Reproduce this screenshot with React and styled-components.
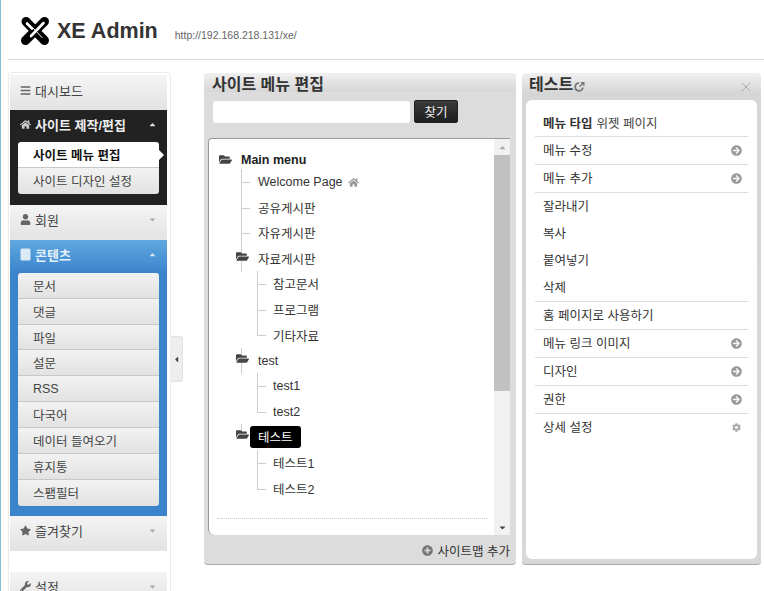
import { createGlobalStyle, styled } from "styled-components";
import {
  FaArrowCircleRight,
  FaBars,
  FaCaretDown,
  FaCaretLeft,
  FaCaretUp,
  FaCog,
  FaFolderOpen,
  FaHome,
  FaPlusCircle,
  FaStar,
  FaUser,
  FaWrench,
} from "react-icons/fa";
import { X } from "lucide-react";

const GlobalStyle = createGlobalStyle`
  html, body {
    margin: 0;
    height: 591px;
    overflow: hidden;
    background: #fff;
  }
  body {
    font-family: "Liberation Sans", "Noto Sans CJK KR", sans-serif;
    font-size: 12.5px;
    color: #333;
  }
  * { box-sizing: border-box; }
`;

const PageIcon = () => (
  <svg width="11" height="13" viewBox="0 0 11 13">
    <rect x="0.5" y="0.5" width="10" height="12" rx="1.5" fill="currentColor" />
  </svg>
);

const sideMenus = [
  { label: "대시보드", icon: <FaBars />, kind: "plain", noCaret: true },
  {
    label: "사이트 제작/편집",
    icon: <FaHome />,
    kind: "dark",
    items: ["사이트 메뉴 편집", "사이트 디자인 설정"],
    active: 0,
  },
  { label: "회원", icon: <FaUser />, kind: "plain" },
  {
    label: "콘텐츠",
    icon: <PageIcon />,
    kind: "blue",
    items: ["문서", "댓글", "파일", "설문", "RSS", "다국어", "데이터 들여오기", "휴지통", "스팸필터"],
  },
  { label: "즐겨찾기", icon: <FaStar />, kind: "plain" },
];

const actions = [
  { label: "메뉴 수정", icon: "arrow", line: true },
  { label: "메뉴 추가", icon: "arrow", line: true },
  { label: "잘라내기" },
  { label: "복사" },
  { label: "붙여넣기" },
  { label: "삭제", line: true },
  { label: "홈 페이지로 사용하기", line: true },
  { label: "메뉴 링크 이미지", icon: "arrow", line: true },
  { label: "디자인", icon: "arrow", line: true },
  { label: "권한", icon: "arrow", line: true },
  { label: "상세 설정", icon: "gear" },
];

const XeLogo = () => (
  <svg width="30" height="30" viewBox="0 0 30 30">
    <g fill="none" strokeLinecap="round">
      <path d="M6 5.5 L24.5 24.5" stroke="#000" strokeWidth="9" />
      <path d="M24.5 5.5 L5.5 24.5" stroke="#000" strokeWidth="9" />
      <path d="M7 7.5 L12 12.5" stroke="#fff" strokeWidth="2.6" />
      <path d="M23.5 7 L11 20" stroke="#fff" strokeWidth="2.6" />
      <path d="M13 12 L22 21.5" stroke="#fff" strokeWidth="1" />
    </g>
  </svg>
);

const ShareIcon = () => (
  <svg width="11" height="11" viewBox="0 0 11 11">
    <path d="M8.8 6.5 A3.8 3.8 0 1 1 5 2.2" fill="none" stroke="#777" strokeWidth="1.8" />
    <path d="M5.5 5.6 L9 2.4 M6.6 1.6 H9.8 V4.8" fill="none" stroke="#777" strokeWidth="1.4" />
  </svg>
);

const TreeRow = ({ level, folder, last, selected, home, children }) => (
  <Row $level={level} $folder={folder} $last={last}>
    {folder && (
      <FolderIcon $level={level}>
        <FaFolderOpen />
      </FolderIcon>
    )}
    <RowText $selected={selected} $bold={level === 0}>
      {children}
    </RowText>
    {home && (
      <HomeMark>
        <FaHome />
      </HomeMark>
    )}
  </Row>
);

const App = () => {
  return (
    <Page>
      <GlobalStyle />
      <Header>
        <XeLogo />
        <Brand>XE Admin</Brand>
        <SiteUrl>http://192.168.218.131/xe/</SiteUrl>
      </Header>

      <Body>
        <Sidebar>
          {sideMenus.map((menu) => (
            <MenuGroup key={menu.label} $kind={menu.kind}>
              <MenuHead $kind={menu.kind}>
                <MenuIcon $kind={menu.kind}>{menu.icon}</MenuIcon>
                <MenuLabel $kind={menu.kind}>{menu.label}</MenuLabel>
                {!menu.noCaret && (
                  <MenuCaret $kind={menu.kind}>{menu.items ? <FaCaretUp /> : <FaCaretDown />}</MenuCaret>
                )}
              </MenuHead>
              {menu.items && (
                <SubList $kind={menu.kind}>
                  {menu.items.map((item, i) => (
                    <SubItem key={item} $active={menu.active === i}>
                      {item}
                    </SubItem>
                  ))}
                </SubList>
              )}
            </MenuGroup>
          ))}
          <SideSpacer />
          <MenuGroup $kind="plain">
            <MenuHead $kind="plain">
              <MenuIcon $kind="plain">
                <FaWrench />
              </MenuIcon>
              <MenuLabel $kind="plain">설정</MenuLabel>
              <MenuCaret $kind="plain">
                <FaCaretDown />
              </MenuCaret>
            </MenuHead>
          </MenuGroup>
        </Sidebar>

        <Toggle>
          <FaCaretLeft />
        </Toggle>

        <EditPanel>
          <PanelTitle>사이트 메뉴 편집</PanelTitle>
          <SearchBar>
            <SearchInput />
            <SearchButton>찾기</SearchButton>
          </SearchBar>
          <TreeBox>
            <TreeScroll>
              <TreeList>
                <TreeRow level={0} folder>Main menu</TreeRow>
                <TreeRow level={1} home>Welcome Page</TreeRow>
                <TreeRow level={1}>공유게시판</TreeRow>
                <TreeRow level={1}>자유게시판</TreeRow>
                <TreeRow level={1} folder>자료게시판</TreeRow>
                <TreeRow level={2}>참고문서</TreeRow>
                <TreeRow level={2}>프로그램</TreeRow>
                <TreeRow level={2} last>기타자료</TreeRow>
                <TreeRow level={1} folder>test</TreeRow>
                <TreeRow level={2}>test1</TreeRow>
                <TreeRow level={2} last>test2</TreeRow>
                <TreeRow level={1} folder last selected>테스트</TreeRow>
                <TreeRow level={2}>테스트1</TreeRow>
                <TreeRow level={2} last>테스트2</TreeRow>
              </TreeList>
              <TreeRule />
            </TreeScroll>
            <ScrollBar>
              <ScrollArrow>
                <FaCaretUp />
              </ScrollArrow>
              <ScrollTrack>
                <ScrollThumb />
              </ScrollTrack>
              <ScrollArrow $dark>
                <FaCaretDown />
              </ScrollArrow>
            </ScrollBar>
          </TreeBox>
          <PanelFoot>
            <FootIcon>
              <FaPlusCircle />
            </FootIcon>
            사이트맵 추가
          </PanelFoot>
        </EditPanel>

        <DetailPanel>
          <DetailHead>
            <PanelTitle $small>테스트</PanelTitle>
            <ShareIcon />
            <CloseMark>
              <X size={16} strokeWidth={1.1} />
            </CloseMark>
          </DetailHead>
          <DetailCard>
            <TypeRow>
              <TypeKey>메뉴 타입</TypeKey>위젯 페이지
            </TypeRow>
            {actions.map((action) => (
              <ActionRow key={action.label} $line={action.line}>
                {action.label}
                {action.icon === "arrow" && (
                  <ActionIcon>
                    <FaArrowCircleRight />
                  </ActionIcon>
                )}
                {action.icon === "gear" && (
                  <ActionIcon $small>
                    <FaCog />
                  </ActionIcon>
                )}
              </ActionRow>
            ))}
          </DetailCard>
        </DetailPanel>
      </Body>
    </Page>
  );
};

const Page = styled.div`
  width: 764px;
  height: 591px;
  overflow: hidden;
  border-left: 1px solid #7fc4d8;
`;

const Header = styled.header`
  height: 60px;
  margin-left: 7px;
  padding: 3px 0 0 12px;
  display: flex;
  align-items: center;
  border-bottom: 1px solid #dcdcdc;
`;

const Brand = styled.div`
  margin-left: 7px;
  font-size: 21.5px;
  font-weight: 700;
  color: #333;
`;

const SiteUrl = styled.div`
  margin: 8px 0 0 17px;
  font-size: 10.5px;
  color: #666;
`;

const Body = styled.div`
  display: flex;
  align-items: flex-start;
  padding: 12px 0 0 7px;
`;

const Sidebar = styled.nav`
  flex: none;
  width: 163px;
  height: 530px;
  padding: 2px 3px 0 1px;
  background: #fff;
  border: 1px solid #ececec;
  border-radius: 3px 3px 0 0;
`;

const MenuGroup = styled.div`
  background: ${(p) =>
    p.$kind === "dark" ? "#222" : p.$kind === "blue" ? "#3b84cc" : "transparent"};
`;

const MenuHead = styled.div`
  height: ${(p) => (p.$kind === "plain" ? "35px" : p.$kind === "blue" ? "33px" : "32px")};
  padding: 0 10px ${(p) => (p.$kind === "plain" ? "4px" : "3px")};
  display: flex;
  align-items: center;
  background: ${(p) =>
    p.$kind === "blue"
      ? "linear-gradient(#5fa8df, #3b84cc)"
      : p.$kind === "dark"
      ? "#222"
      : "linear-gradient(#f4f4f4, #e3e3e3)"};
  border-bottom: ${(p) => (p.$kind === "plain" ? "1px solid #e6e6e6" : "0")};
`;

const MenuIcon = styled.span`
  width: 15px;
  display: flex;
  font-size: 11px;
  color: ${(p) => (p.$kind === "plain" ? "#666" : p.$kind === "dark" ? "#ccc" : "#dbeaf7")};
`;

const MenuLabel = styled.span`
  flex: 1;
  font-size: 13px;
  font-weight: ${(p) => (p.$kind === "plain" ? 400 : 700)};
  color: ${(p) => (p.$kind === "plain" ? "#444" : p.$kind === "dark" ? "#eee" : "#e4f0fa")};
`;

const MenuCaret = styled.span`
  display: flex;
  font-size: 9px;
  color: ${(p) => (p.$kind === "plain" ? "#aaa" : p.$kind === "dark" ? "#ddd" : "#cfe3f5")};
`;

const SubList = styled.ul`
  list-style: none;
  margin: 0;
  padding: 0 8px ${(p) => (p.$kind === "blue" ? "10px" : "11px")};
`;

const SubItem = styled.li`
  position: relative;
  height: 25.9px;
  padding-left: 15px;
  display: flex;
  align-items: center;
  color: ${(p) => (p.$active ? "#111" : "#444")};
  font-weight: ${(p) => (p.$active ? 700 : 400)};
  background: ${(p) => (p.$active ? "#fff" : "linear-gradient(#f2f2f2, #e2e2e2)")};
  border-bottom: 1px solid #c8c8c8;

  &:first-child {
    border-radius: 3px 3px 0 0;
  }
  &:last-child {
    border-bottom: 0;
    border-radius: 0 0 3px 3px;
  }
  ${(p) =>
    p.$active &&
    `&::after {
      content: "";
      position: absolute;
      right: -5px;
      top: 8px;
      border-left: 5px solid #fff;
      border-top: 5px solid transparent;
      border-bottom: 5px solid transparent;
    }`}
`;

const SideSpacer = styled.div`
  height: 21px;
`;

const Toggle = styled.div`
  flex: none;
  width: 12px;
  height: 46px;
  margin-top: 264px;
  display: flex;
  align-items: center;
  justify-content: center;
  font-size: 9px;
  color: #444;
  background: #eee;
  border: 1px solid #e2e2e2;
  border-left: 0;
  border-radius: 0 3px 3px 0;
`;

const EditPanel = styled.section`
  flex: none;
  width: 312px;
  height: 492px;
  margin: 1px 0 0 21px;
  display: flex;
  flex-direction: column;
  background: #dcdcdc;
  border-bottom: 1px solid #aaa;
  border-radius: 4px;
`;

const PanelTitle = styled.h2`
  margin: 0;
  height: ${(p) => (p.$small ? "auto" : "19px")};
  padding: ${(p) => (p.$small ? "0" : "3px 0 0 8px")};
  font-size: 16px;
  line-height: 18px;
  font-weight: 700;
  color: #333;
  background: ${(p) => (p.$small ? "none" : "linear-gradient(#f0f0f0, #d6d6d6)")};
  border-radius: 4px 4px 0 0;
`;

const SearchBar = styled.div`
  display: flex;
  align-items: center;
  gap: 4px;
  margin-top: 8px;
  padding-left: 9px;
`;

const SearchInput = styled.input`
  width: 197px;
  height: 22px;
  border: 0;
  border-radius: 3px;
  background: #fff;
`;

const SearchButton = styled.button`
  width: 44px;
  height: 23px;
  padding: 0;
  border: 1px solid #222;
  border-radius: 2px;
  font: inherit;
  color: #eee;
  background: linear-gradient(#3c3c3c, #1d1d1d);
`;

const TreeBox = styled.div`
  flex: none;
  height: 397px;
  margin: 15px 6px 0 4px;
  display: flex;
  background: #fff;
  border-top: 1px solid #999;
  border-left: 1px solid #999;
  border-radius: 4px 0 0 6px;
`;

const TreeScroll = styled.div`
  flex: 1;
  padding: 11px 0 0 8px;
`;

const TreeList = styled.ul`
  list-style: none;
  margin: 0;
  padding: 0;
  height: 368px;
`;

const Row = styled.li`
  position: relative;
  height: ${(p) => (p.$level === 0 ? "19px" : "25.55px")};
  display: flex;
  align-items: center;
  padding-left: ${(p) => [24, 41, 56][p.$level]}px;

  ${(p) =>
    p.$level > 0 &&
    !p.$folder &&
    `&::before {
      content: "";
      position: absolute;
      left: ${p.$level === 1 ? 24 : 40}px;
      top: 0;
      width: 9px;
      height: 13px;
      border-bottom: 1px solid #ccc;
    }`}

  ${(p) =>
    p.$level > 0 &&
    `&::after {
      content: "";
      position: absolute;
      left: ${p.$level === 1 ? 24 : 40}px;
      top: 0;
      height: ${p.$last ? 13 : 26}px;
      border-left: 1px solid #ccc;
    }`}
`;

const FolderIcon = styled.span`
  position: absolute;
  left: ${(p) => (p.$level === 0 ? 2 : 19)}px;
  top: ${(p) => (p.$level === 0 ? 3 : 4)}px;
  z-index: 1;
  display: flex;
  font-size: 13px;
  color: #444;
`;

const RowText = styled.span`
  position: relative;
  z-index: 2;
  font-weight: ${(p) => (p.$bold ? 700 : 400)};
  color: ${(p) => (p.$selected ? "#fff" : p.$bold ? "#222" : "#333")};
  ${(p) =>
    p.$selected &&
    `
    margin-left: -8px;
    padding: 1px 8px 2px;
    background: #000;
    border-radius: 3px;
  `}
`;

const HomeMark = styled.span`
  display: flex;
  margin: 2px 0 0 5px;
  font-size: 11px;
  color: #999;
`;

const TreeRule = styled.div`
  margin: 0 7px 0 0;
  border-top: 1px dotted #ccc;
`;

const ScrollBar = styled.div`
  flex: none;
  width: 16px;
  display: flex;
  flex-direction: column;
  background: #f1f1f1;
`;

const ScrollArrow = styled.div`
  height: 16px;
  display: flex;
  align-items: center;
  justify-content: center;
  font-size: 9px;
  color: ${(p) => (p.$dark ? "#444" : "#aaa")};
`;

const ScrollTrack = styled.div`
  flex: 1;
`;

const ScrollThumb = styled.div`
  height: 236px;
  background: #c1c1c1;
`;

const PanelFoot = styled.div`
  display: flex;
  align-items: center;
  justify-content: flex-end;
  gap: 5px;
  padding: 6px 6px 0 0;
  color: #333;
`;

const FootIcon = styled.span`
  display: flex;
  font-size: 11px;
  color: #777;
`;

const DetailPanel = styled.section`
  flex: none;
  width: 239px;
  height: 492px;
  margin: 1px 0 0 6px;
  padding: 0 4px 5px;
  display: flex;
  flex-direction: column;
  background: linear-gradient(#f0f0f0, #d6d6d6 20px, #d8d8d8);
  border-bottom: 1px solid #aaa;
  border-radius: 4px;
`;

const DetailHead = styled.div`
  height: 27px;
  padding: 3px 3px 0 3px;
  display: flex;
  align-items: flex-start;
  gap: 1px;

  svg {
    margin-top: 5px;
  }
`;

const CloseMark = styled.span`
  display: flex;
  margin: -2px 0 0 auto;
  color: #999;
`;

const DetailCard = styled.div`
  flex: 1;
  padding: 9px 9px 0;
  background: #fff;
  border-radius: 6px;
`;

const TypeRow = styled.div`
  height: 28px;
  padding: 0 8px;
  display: flex;
  align-items: center;
  gap: 4px;
  color: #444;
  border-bottom: 1px solid #ddd;
`;

const TypeKey = styled.strong`
  color: #333;
`;

const ActionRow = styled.div`
  height: ${(p) => (p.$line ? "28px" : "27px")};
  padding: 0 6px 2px 8px;
  display: flex;
  align-items: center;
  justify-content: space-between;
  color: #333;
  border-bottom: ${(p) => (p.$line ? "1px solid #ddd" : "0")};
`;

const ActionIcon = styled.span`
  display: flex;
  margin: 2px ${(p) => (p.$small ? "1px" : "0")} 0 0;
  font-size: ${(p) => (p.$small ? "9px" : "11px")};
  color: ${(p) => (p.$small ? "#aaa" : "#999")};
`;

export default App;
